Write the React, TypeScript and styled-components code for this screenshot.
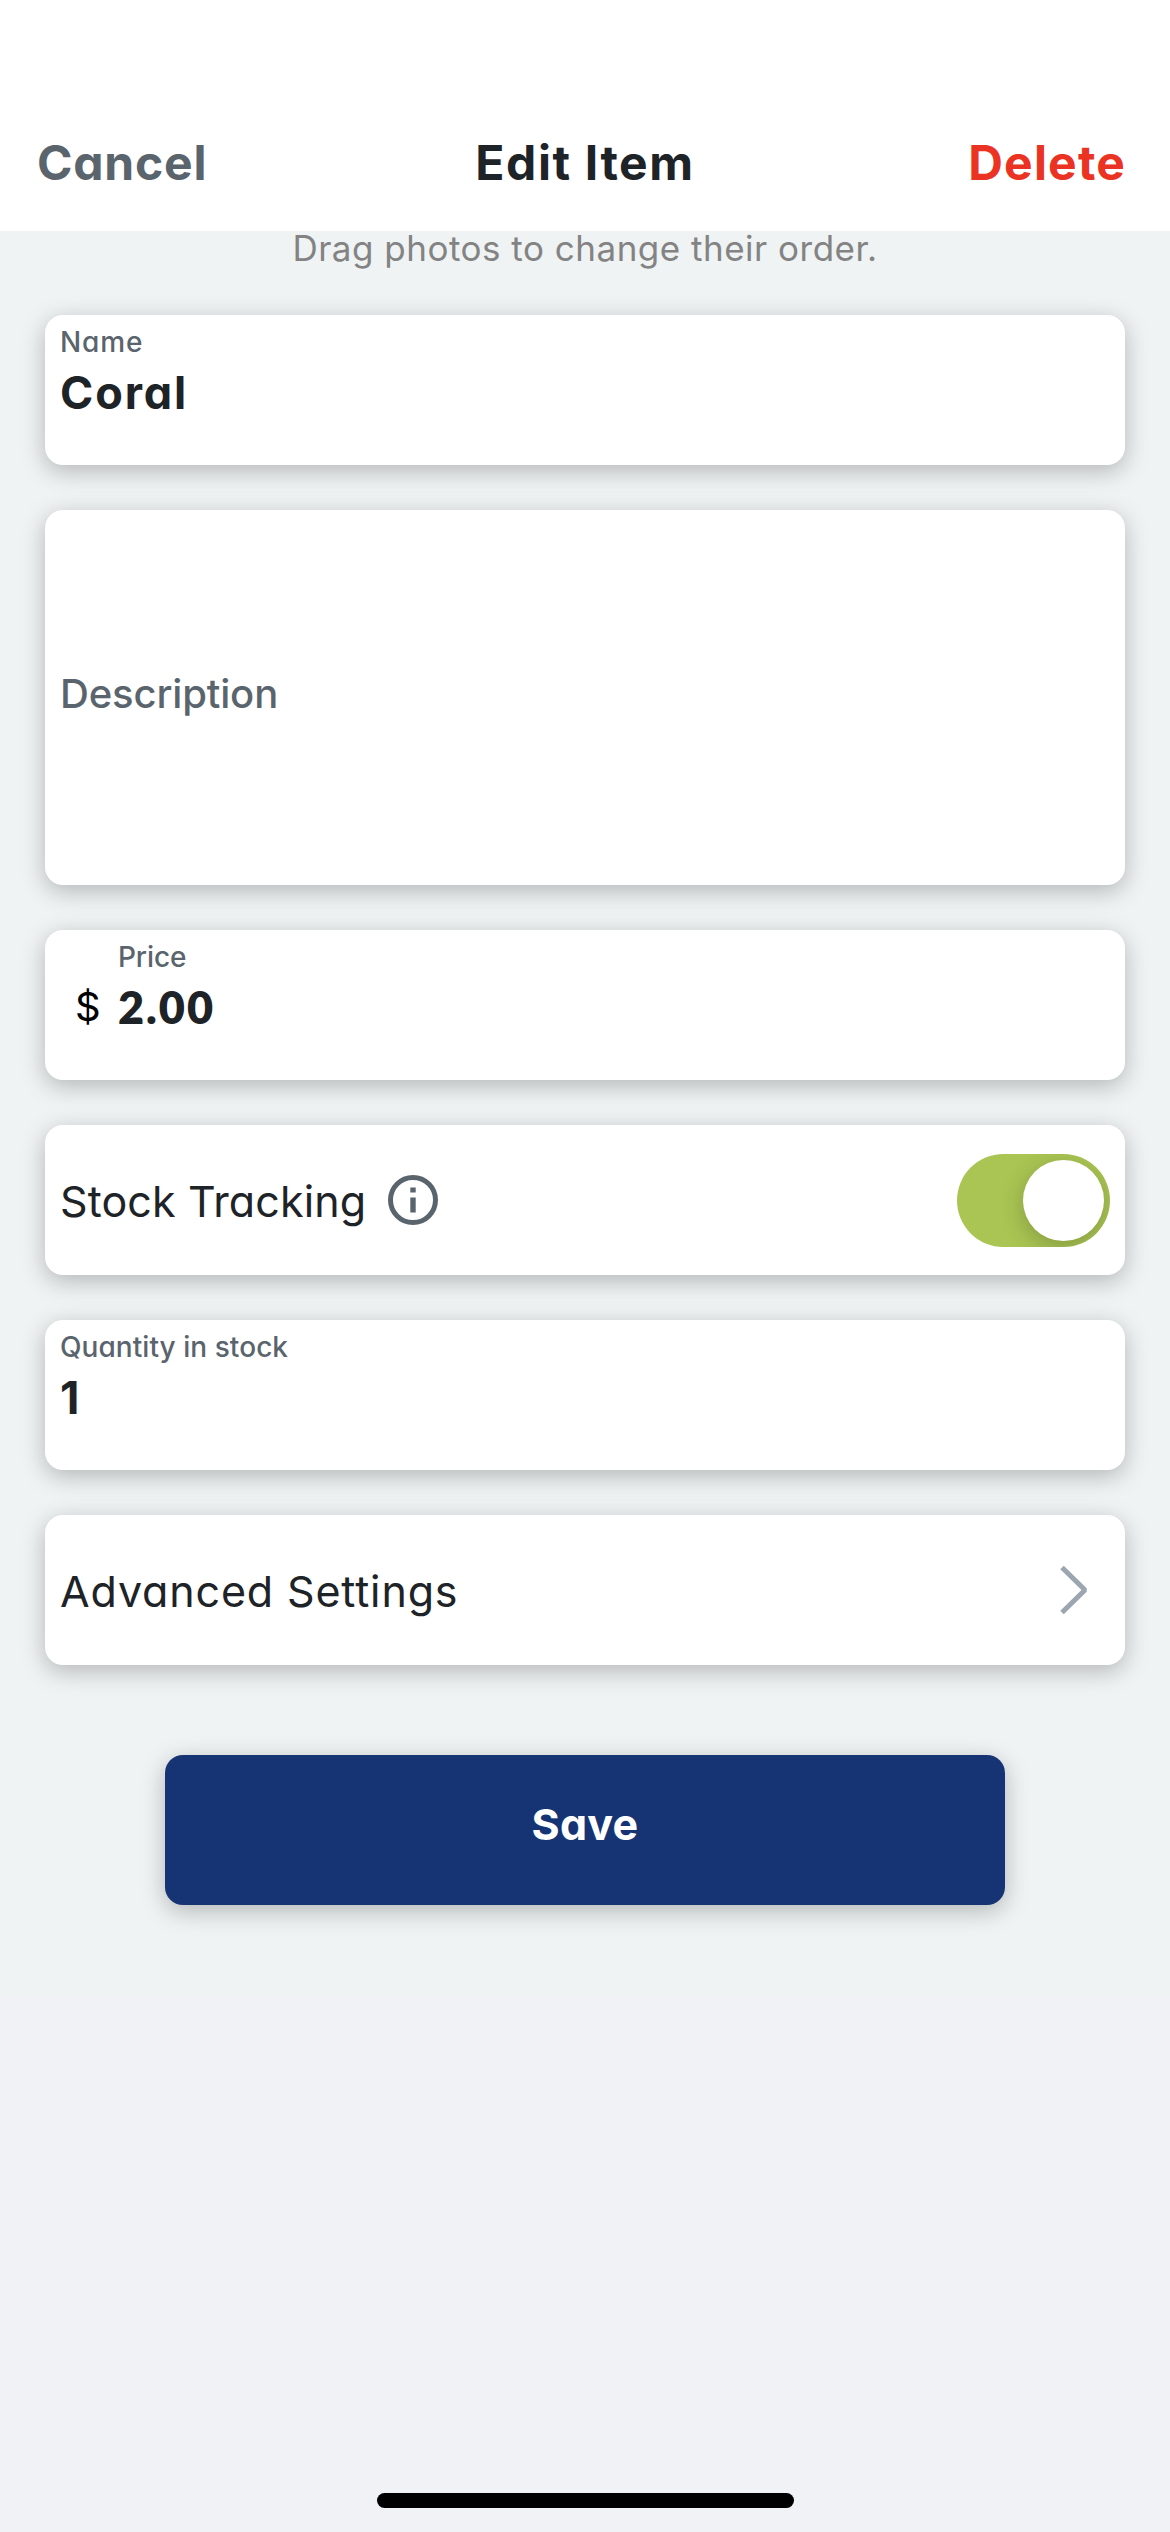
import React from "react";
import styled, { createGlobalStyle } from "styled-components";

const GlobalStyle = createGlobalStyle`
  *, *::before, *::after { box-sizing: border-box; }
  body { margin: 0; background: #f1f2f6; }
  button { border: 0; padding: 0; background: none; font: inherit; color: inherit; letter-spacing: inherit; }
`;

const Screen = styled.div`
  display: flex;
  flex-direction: column;
  width: 1170px;
  height: 2532px;
  background: #f1f2f6;
  color: #1e2327;
  font-family: Inter, "Liberation Sans", sans-serif;
  font-feature-settings: "cv11" 1;
`;

const Header = styled.header`
  display: grid;
  grid-template-columns: 1fr auto 1fr;
  align-items: start;
  height: 231px;
  padding: 133px 37px 0;
  background: #fff;
  font-size: 48px;
  font-weight: 700;
  line-height: 60px;
`;

const Title = styled.h1`
  margin: 0;
  font-size: inherit;
  font-weight: inherit;
  letter-spacing: 1.6px;
`;

const HeaderAction = styled.button<{ $tone: string; $end?: boolean; $spacing: number }>`
  justify-self: ${(p) => (p.$end ? "end" : "start")};
  margin-right: ${(p) => (p.$end ? 7 : 0)}px;
  && {
    color: ${(p) => p.$tone};
    letter-spacing: ${(p) => p.$spacing}px;
  }
`;

const Form = styled.main`
  display: flex;
  flex-direction: column;
  gap: 45px;
  height: 1764px;
  padding: 0 45px;
  background: #eff3f4;
`;

const Hint = styled.p`
  margin: 0 0 5px;
  color: #838383;
  font-size: 35px;
  line-height: 34px;
  letter-spacing: 0.5px;
  text-align: center;
  font-feature-settings: normal;
`;

const Card = styled.section<{ $tall?: boolean }>`
  display: flex;
  flex-shrink: 0;
  height: ${(p) => (p.$tall ? 375 : 150)}px;
  padding: 0 15px;
  border-radius: 18px;
  background: #fff;
  box-shadow: 0 6px 23px rgba(0, 0, 0, 0.25);
`;

const Field = styled.div`
  display: flex;
  flex-direction: column;
  gap: 5px;
  padding-top: 9px;
`;

const Label = styled.label<{ $spacing: number }>`
  color: #5a646d;
  font-size: 28px;
  font-weight: 500;
  line-height: 37px;
  letter-spacing: ${(p) => p.$spacing}px;
`;

const Value = styled.div<{ $spacing?: number; $narrow?: boolean }>`
  font-family: ${(p) => (p.$narrow ? "Lato" : "Inter")}, "Liberation Sans", sans-serif;
  font-size: 45px;
  font-weight: ${(p) => (p.$narrow ? 800 : 700)};
  line-height: ${(p) => (p.$narrow ? 52 : 54)}px;
  letter-spacing: ${(p) => p.$spacing ?? 0}px;
`;

const Currency = styled.span`
  width: 58px;
  padding: 50px 0 0 15px;
  color: #000;
  font-size: 40px;
  line-height: 54px;
`;

const Placeholder = styled.span`
  align-self: center;
  padding-bottom: 8px;
  color: #5a646d;
  font-size: 40px;
  font-weight: 500;
  letter-spacing: -0.15px;
`;

const RowCard = styled(Card)`
  align-items: center;
`;

const RowLabel = styled.span<{ $spacing: number }>`
  padding-top: 2px;
  font-size: 43px;
  letter-spacing: ${(p) => p.$spacing}px;
`;

const InfoIcon = styled.svg`
  width: 52px;
  height: 52px;
  margin-left: 21px;
`;

const Toggle = styled.button`
  display: flex;
  justify-content: flex-end;
  align-items: center;
  width: 153px;
  height: 93px;
  margin-left: auto;
  overflow: hidden;
  border-radius: 47px;
  && {
    padding-right: 6px;
    background: #aac553;
  }
`;

const Knob = styled.span`
  width: 81px;
  height: 81px;
  border-radius: 50%;
  background: #fff;
  box-shadow: 0 6px 23px rgba(0, 0, 0, 0.22);
`;

const Chevron = styled.svg`
  width: 32px;
  height: 56px;
  margin: 0 21px 0 auto;
`;

const SaveButton = styled.button`
  align-self: center;
  width: 840px;
  height: 150px;
  margin-top: 45px;
  border-radius: 18px;
  box-shadow: 0 6px 23px rgba(0, 0, 0, 0.25);
  && {
    padding-bottom: 12px;
    background: #163373;
    color: #fff;
    font-size: 43px;
    font-weight: 700;
    letter-spacing: 0.3px;
  }
`;

const HomeBar = styled.div`
  width: 417px;
  height: 15px;
  margin: auto auto 24px;
  border-radius: 8px;
  background: #000;
`;

export default function App() {
  return (
    <>
      <GlobalStyle />
      <Screen>
        <Header>
          <HeaderAction $tone="#5a646d" $spacing={0.8}>Cancel</HeaderAction>
          <Title>Edit Item</Title>
          <HeaderAction $tone="#ea3323" $spacing={1.2} $end>Delete</HeaderAction>
        </Header>
        <Form>
          <Hint>Drag photos to change their order.</Hint>
          <Card>
            <Field>
              <Label $spacing={0.9}>Name</Label>
              <Value $spacing={1.9}>Coral</Value>
            </Field>
          </Card>
          <Card $tall>
            <Placeholder>Description</Placeholder>
          </Card>
          <Card>
            <Currency>$</Currency>
            <Field>
              <Label $spacing={-0.1}>Price</Label>
              <Value $narrow $spacing={2}>2.00</Value>
            </Field>
          </Card>
          <RowCard>
            <RowLabel $spacing={0.1}>Stock Tracking</RowLabel>
            <InfoIcon viewBox="0 0 52 52" fill="#5a646d">
              <circle cx="26" cy="26" r="22.5" fill="none" stroke="#5a646d" strokeWidth="5" />
              <rect x="23.3" y="13.5" width="5.4" height="5" />
              <rect x="23.3" y="23.5" width="5.4" height="15" />
            </InfoIcon>
            <Toggle role="switch" aria-checked="true">
              <Knob />
            </Toggle>
          </RowCard>
          <Card>
            <Field>
              <Label $spacing={0.05}>Quantity in stock</Label>
              <Value>1</Value>
            </Field>
          </Card>
          <RowCard>
            <RowLabel $spacing={0.85}>Advanced Settings</RowLabel>
            <Chevron viewBox="0 0 32 56" fill="none" stroke="#9ca6b0" strokeWidth="5">
              <path d="M5 5.5 L28 28 L5 50.5" strokeLinejoin="bevel" />
            </Chevron>
          </RowCard>
          <SaveButton>Save</SaveButton>
        </Form>
        <HomeBar />
      </Screen>
    </>
  );
}
